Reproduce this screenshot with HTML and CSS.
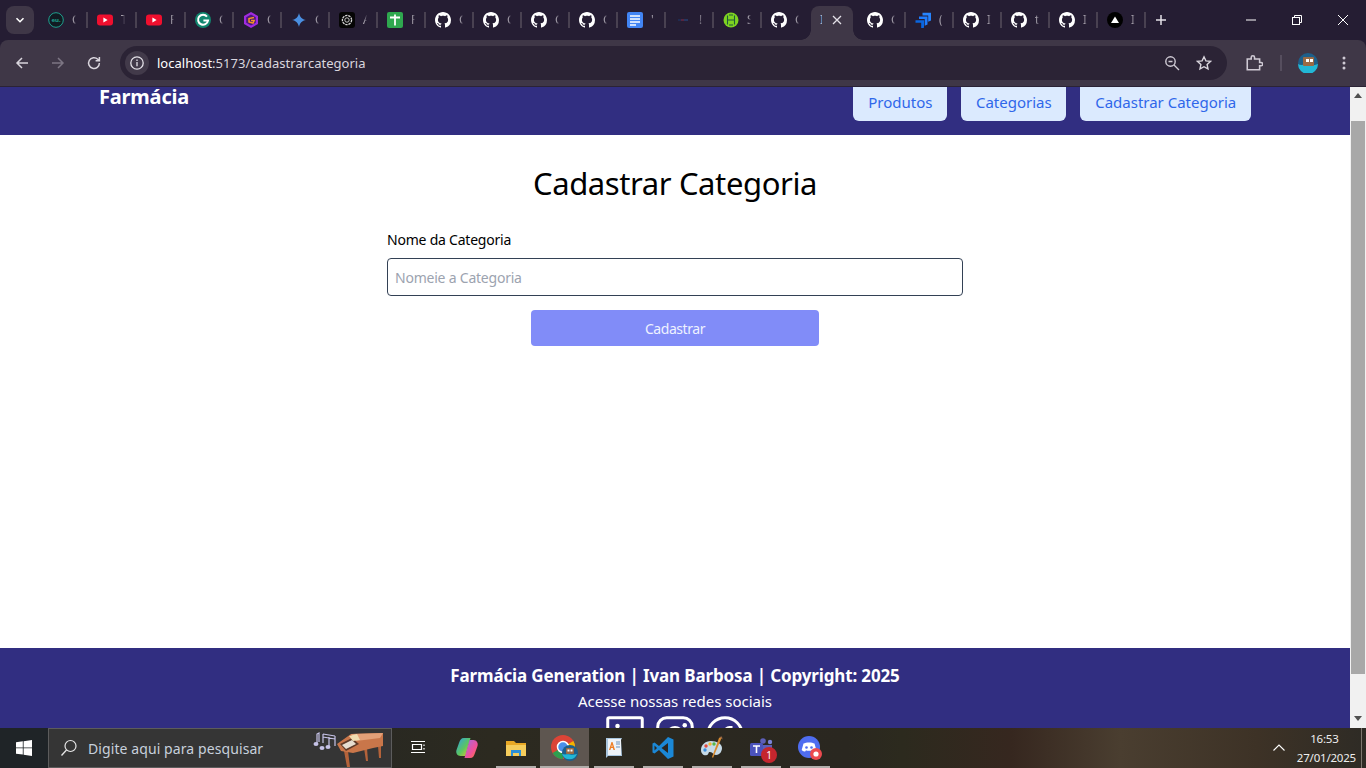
FILE: index.html
```html
<!DOCTYPE html>
<html lang="pt-BR">
<head>
<meta charset="utf-8">
<title>Farmácia</title>
<link rel="stylesheet" href="styles.css">
</head>
<body>
<svg class="defs" width="0" height="0" aria-hidden="true">
  <symbol id="gh" viewBox="0 0 16 16"><path fill="#fff" fill-rule="evenodd" d="M8 0C3.58 0 0 3.58 0 8c0 3.54 2.29 6.53 5.47 7.59.4.07.55-.17.55-.38 0-.19-.01-.82-.01-1.49-2.01.37-2.53-.49-2.69-.94-.09-.23-.48-.94-.82-1.13-.28-.15-.68-.52-.01-.53.63-.01 1.08.58 1.23.82.72 1.21 1.87.87 2.33.66.07-.52.28-.87.51-1.07-1.78-.2-3.64-.89-3.64-3.95 0-.87.31-1.59.82-2.15-.08-.2-.36-1.02.08-2.12 0 0 .67-.21 2.2.82.64-.18 1.32-.27 2-.27.68 0 1.36.09 2 .27 1.53-1.04 2.2-.82 2.2-.82.44 1.1.16 1.92.08 2.12.51.56.82 1.27.82 2.15 0 3.07-1.87 3.75-3.65 3.95.29.25.54.73.54 1.48 0 1.07-.01 1.93-.01 2.2 0 .21.15.46.55.38A8.013 8.013 0 0016 8c0-4.42-3.58-8-8-8z"/></symbol>
  <symbol id="yt" viewBox="0 0 16 16"><rect y="2.5" width="16" height="11" rx="3" fill="#f00f2e"/><path d="M6.4 5.6 10.6 8l-4.2 2.4z" fill="#fff"/></symbol>
</svg>

<header class="tabbar">
  <button class="tabsearch" aria-label="Pesquisar guias"><svg class="ic10" viewBox="0 0 10 10"><path d="M1.5 3.2 5 6.7l3.5-3.5" fill="none" stroke="#fff" stroke-width="1.6"/></svg></button>
  <div class="strip">
    <div class="tab"><svg class="fav" viewBox="0 0 16 16"><circle cx="8" cy="8" r="7.3" fill="#111a22" stroke="#1fa08e" stroke-width="1"/><text class="eu" x="8" y="10.300" text-anchor="middle">eu.</text></svg><span class="sliver">Curso</span></div>
    <div class="tab"><svg class="fav"><use href="#yt"/></svg><span class="sliver">TypeScript</span></div>
    <div class="tab"><svg class="fav"><use href="#yt"/></svg><span class="sliver">Fastify</span></div>
    <div class="tab"><svg class="fav" viewBox="0 0 16 16"><circle cx="8" cy="8" r="8" fill="#11866f"/><path d="M12 4.6A5 5 0 1 0 13 8.6H8.4" fill="none" stroke="#fff" stroke-width="2"/></svg><span class="sliver">Grammarly</span></div>
    <div class="tab"><svg class="fav" viewBox="0 0 16 16"><path d="M8 0 15 4v8l-7 4-7-4V4z" fill="#a02be0"/><path d="M8 2.500 12.800 5.200v5.600L8 13.500 3.200 10.800V5.200z" fill="#4a1a7a"/><path d="M11 5.500 6 6.500v3.500l4 1.200 1.200-2.800H8" fill="none" stroke="#f59324" stroke-width="1.500"/></svg><span class="sliver">Coda</span></div>
    <div class="tab"><svg class="fav" viewBox="0 0 16 16"><path d="M8 1c.6 3.800 3.200 6.400 7 7-3.800.6-6.400 3.200-7 7-.6-3.800-3.200-6.400-7-7 3.800-.6 6.400-3.200 7-7z" fill="#4a8fe0"/></svg><span class="sliver">Gemini</span></div>
    <div class="tab"><svg class="fav" viewBox="0 0 16 16"><rect width="16" height="16" rx="3" fill="#050505"/><circle cx="8" cy="8" r="4.600" fill="none" stroke="#d8d8d8" stroke-width="1.300" stroke-dasharray="2.400 .8"/><circle cx="8" cy="8" r="2.200" fill="none" stroke="#d8d8d8" stroke-width=".9"/></svg><span class="sliver">A</span></div>
    <div class="tab"><svg class="fav" viewBox="0 0 16 16"><rect width="16" height="16" rx="2" fill="#2fa84f"/><path d="M3 5.500h10M8 2.500V13.500" stroke="#fff" stroke-width="1.800"/></svg><span class="sliver">Planilha</span></div>
    <div class="tab"><svg class="fav"><use href="#gh"/></svg><span class="sliver">GitHub</span></div>
    <div class="tab"><svg class="fav"><use href="#gh"/></svg><span class="sliver">GitHub</span></div>
    <div class="tab"><svg class="fav"><use href="#gh"/></svg><span class="sliver">GitHub</span></div>
    <div class="tab"><svg class="fav"><use href="#gh"/></svg><span class="sliver">GitHub</span></div>
    <div class="tab"><svg class="fav" viewBox="0 0 16 16"><rect width="16" height="16" rx="2" fill="#4285f4"/><path d="M3 4h10M3 7h10M3 10h10M3 13h6" stroke="#fff" stroke-width="1.500"/></svg><span class="sliver">'</span></div>
    <div class="tab"><svg class="fav" viewBox="0 0 16 16"><path d="M3 8h3" stroke="#1d3a6e" stroke-width="1"/><path d="M6 8h3" stroke="#8a2f4a" stroke-width="1"/><path d="M9 8h4" stroke="#27508f" stroke-width="1"/></svg><span class="sliver dim">!</span></div>
    <div class="tab"><svg class="fav" viewBox="0 0 16 16"><circle cx="8" cy="8" r="7.500" fill="#7ed321"/><path d="M4.500 3.500v9M11.500 3.500v9M4.500 8h7M6 3h4M6 13h4" fill="none" stroke="#1f5a3a" stroke-width="1.100"/></svg><span class="sliver">S</span></div>
    <div class="tab"><svg class="fav"><use href="#gh"/></svg><span class="sliver">GitHub</span></div>
    <div class="tab active"><span class="sliver active-title">I</span><svg class="ic10" viewBox="0 0 10 10"><path d="M1 1l8 8M9 1 1 9" stroke="#e4e1e8" stroke-width="1.300"/></svg></div>
    <div class="tab"><svg class="fav"><use href="#gh"/></svg><span class="sliver">GitHub</span></div>
    <div class="tab"><svg class="fav" viewBox="0 0 16 16"><path d="M7.500 .8H16V8.500L13.200 9.800V3.400H7.500z" fill="#2684ff"/><path d="M4 4.500h8.500v8L9.700 13.800V7.100H4z" fill="#1f7dff"/><path d="M.5 8.200H9v7.500L6.200 16.500V10.800H.5z" fill="#0a66e0"/></svg><span class="sliver">(</span></div>
    <div class="tab"><svg class="fav"><use href="#gh"/></svg><span class="sliver">I</span></div>
    <div class="tab"><svg class="fav"><use href="#gh"/></svg><span class="sliver">t</span></div>
    <div class="tab"><svg class="fav"><use href="#gh"/></svg><span class="sliver">I</span></div>
    <div class="tab"><svg class="fav" viewBox="0 0 16 16"><circle cx="8" cy="8" r="8" fill="#000"/><path d="M8 4.600 12 11H4z" fill="#fff"/></svg><span class="sliver">I</span></div>
  </div>
  <button class="newtab" aria-label="Nova guia"><svg class="ic12" viewBox="0 0 12 12"><path d="M6 1v10M1 6h10" stroke="#e4e1e8" stroke-width="1.500"/></svg></button>
  <div class="winctrls">
    <span class="winbtn"><svg class="ic12" viewBox="0 0 12 12"><path d="M1 6h10" stroke="#fff"/></svg></span>
    <span class="winbtn"><svg class="ic12" viewBox="0 0 12 12"><path d="M3.500 3V1.500h7v7H9" fill="none" stroke="#fff"/><rect x="1.500" y="3.500" width="7" height="7" fill="none" stroke="#fff"/></svg></span>
    <span class="winbtn"><svg class="ic12" viewBox="0 0 12 12"><path d="M1 1l10 10M11 1 1 11" stroke="#fff"/></svg></span>
  </div>
</header>

<div class="toolbar">
  <div class="navbtns">
    <svg class="tool" viewBox="0 0 16 16"><path d="M14 8H3M8 3 3 8l5 5" fill="none" stroke="#d9d5dd" stroke-width="1.500"/></svg>
    <svg class="tool" viewBox="0 0 16 16"><path d="M2 8h11M8 3l5 5-5 5" fill="none" stroke="#7d7684" stroke-width="1.500"/></svg>
    <svg class="tool" viewBox="0 0 16 16"><path d="M13.400 8A5.400 5.400 0 1 1 11.800 4.200L13.400 5.800M13.400 2v3.800H9.600" fill="none" stroke="#d9d5dd" stroke-width="1.500"/></svg>
  </div>
  <div class="omnibox">
    <span class="sitebtn"><svg class="ic16" viewBox="0 0 16 16"><circle cx="8" cy="8" r="6.200" fill="none" stroke="#e4e1e8" stroke-width="1.300"/><path d="M8 7v4.200M8 4.600v1.300" stroke="#e4e1e8" stroke-width="1.300"/></svg></span>
    <span class="url"><span class="host">localhost</span>:5173/cadastrarcategoria</span>
    <svg class="tool small" viewBox="0 0 16 16"><circle cx="6.500" cy="6.500" r="4.700" fill="none" stroke="#cfcad4" stroke-width="1.400"/><path d="M10 10l5 5M4.500 6.500h4" stroke="#cfcad4" stroke-width="1.400"/></svg>
    <svg class="tool star" viewBox="0 0 16 16"><path d="M8 1.800l1.900 4.100 4.500.5-3.300 3 .9 4.500L8 11.700l-4 2.200.9-4.500-3.300-3 4.500-.5z" fill="none" stroke="#d9d5dd" stroke-width="1.400"/></svg>
  </div>
  <svg class="tool ext" viewBox="0 0 16 16"><path d="M2 4.500h3.500V3a1.500 1.500 0 0 1 3 0v1.500H13V7.500h1.200a1.500 1.500 0 0 1 0 3H13V14H2z" fill="none" stroke="#cfcad4" stroke-width="1.400"/></svg>
  <span class="tooldiv"></span>
  <svg class="avatar" viewBox="0 0 20 20"><circle cx="10" cy="10" r="10" fill="#1e5f8a"/><path d="M0 11c3 2 6 0 10 1s7 0 10-1a10 10 0 0 1-20 0z" fill="#22b7d6"/><rect x="5" y="4" width="11" height="9" rx="1" fill="#9a6a45"/><rect x="8" y="6" width="3" height="3" fill="#fff"/><rect x="12" y="6" width="3" height="3" fill="#fff"/></svg>
  <svg class="tool kebab" viewBox="0 0 16 16"><circle cx="8" cy="3" r="1.500" fill="#cfcad4"/><circle cx="8" cy="8" r="1.500" fill="#cfcad4"/><circle cx="8" cy="13" r="1.500" fill="#cfcad4"/></svg>
</div>

<div class="viewport">
  <div class="pagewrap">
    <div class="page">
      <nav class="sitenav">
        <div class="navinner">
          <div class="brand">Farmácia</div>
          <div class="navlinks">
            <a class="navlink">Produtos</a>
            <a class="navlink">Categorias</a>
            <a class="navlink">Cadastrar Categoria</a>
          </div>
        </div>
      </nav>
      <main class="content">
        <h1 class="title">Cadastrar Categoria</h1>
        <form class="form">
          <label class="label" for="nome">Nome da Categoria</label>
          <input class="input" id="nome" type="text" placeholder="Nomeie a Categoria">
          <button class="submit" type="button">Cadastrar</button>
        </form>
      </main>
      <footer class="sitefoot">
        <p class="footline">Farmácia Generation | Ivan Barbosa | Copyright: 2025</p>
        <p class="footsub">Acesse nossas redes sociais</p>
        <div class="socials">
          <svg class="social" viewBox="0 0 256 256"><rect x="36" y="36" width="184" height="184" rx="8" fill="none" stroke="#fff" stroke-width="16"/><path d="M120 112v64M88 112v64M120 140a28 28 0 0 1 56 0v36" fill="none" stroke="#fff" stroke-width="16"/><circle cx="88" cy="80" r="12" fill="#fff"/></svg>
          <svg class="social" viewBox="0 0 256 256"><rect x="36" y="36" width="184" height="184" rx="48" fill="none" stroke="#fff" stroke-width="16"/><circle cx="128" cy="128" r="40" fill="none" stroke="#fff" stroke-width="16"/><circle cx="180" cy="76" r="12" fill="#fff"/></svg>
          <svg class="social" viewBox="0 0 256 256"><circle cx="128" cy="128" r="92" fill="none" stroke="#fff" stroke-width="16"/><path d="M168 88h-16a24 24 0 0 0-24 24v108M96 144h64" fill="none" stroke="#fff" stroke-width="16"/></svg>
        </div>
      </footer>
    </div>
  </div>
  <div class="scrollbar">
    <span class="arrow up"></span>
    <span class="thumb"></span>
    <span class="arrow down"></span>
  </div>
</div>

<div class="taskbar">
  <span class="startbtn"><svg class="ic16" viewBox="0 0 16 16"><path d="M0 2.300 6.800 1.300v6.200H0zM7.600 1.200 16 0v7.500H7.600zM0 8.300h6.800v6.300L0 13.700zM7.600 8.300H16V16l-8.400-1.200z" fill="#fff"/></svg></span>
  <div class="searchbox">
    <svg class="ic18" viewBox="0 0 18 18"><circle cx="10.500" cy="7" r="5.500" fill="none" stroke="#e6e6e6" stroke-width="1.200"/><path d="M6.500 11 1.500 16.500" stroke="#e6e6e6" stroke-width="1.300"/></svg>
    <span class="searchtext">Digite aqui para pesquisar</span>
    <svg class="piano" viewBox="0 0 72 36"><path d="M4 12V3l2-1v9M10 3v9M16 6v10M22 5v10M10 3l12 2M10 6l12 2" fill="none" stroke="#c6c3e8" stroke-width="1.200"/><ellipse cx="3" cy="13" rx="2.500" ry="2" fill="#c6c3e8"/><ellipse cx="9" cy="17" rx="2.500" ry="2" fill="#c6c3e8"/><ellipse cx="15" cy="16" rx="2.500" ry="2" fill="#c6c3e8"/><path d="M31 20h4l2 16h-3zM51 17h3l1 13h-2zM65 15h3v12h-2z" fill="#b4623a"/><path d="M24 13 38 3l32-1v13l-10 2-20 5-12-2z" fill="#c9764a"/><path d="M38 3l32-1-3 5-24 3z" fill="#e3a078"/><path d="M27 13l12-6 7 6-13 7z" fill="#5f3a28"/><path d="M29 14l10-5 4 4-10 5z" fill="#e6ddd0"/><path d="M36 5l8-2 3 6-7 1z" fill="#efdcb0"/></svg>
  </div>
  <div class="taskapps">
    <span class="app"><svg class="ic18" viewBox="0 0 18 18"><path d="M2 2.500h14M2 13.500h14M3.500 5.500h9v5h-9zM15 5.500v1.500M15 9v1.500" fill="none" stroke="#fff" stroke-width="1.200"/></svg></span>
    <span class="app"><svg class="ic24" viewBox="0 0 24 24"><defs><linearGradient id="cop" x1="0" y1="0" x2="1" y2="1"><stop offset="0" stop-color="#2c9fe8"/><stop offset=".55" stop-color="#5cc65f"/><stop offset="1" stop-color="#f0c22a"/></linearGradient><linearGradient id="cop2" x1="0" y1="0" x2="1" y2="1"><stop offset="0" stop-color="#9a6de7"/><stop offset=".6" stop-color="#f0509a"/><stop offset="1" stop-color="#ff7a2f"/></linearGradient></defs><path d="M9 2c-3 0-4 2-5 5l-2.500 7c-1 3 1 6 4 6h5l5-18z" fill="url(#cop)"/><path d="M15 22c3 0 4-2 5-5l2.500-7c1-3-1-6-4-6h-4l-5 18z" fill="url(#cop2)"/></svg></span>
    <span class="app on"><svg class="ic24" viewBox="0 0 24 24"><path d="M2 5h8l2 2h10v13H2z" fill="#e8a825"/><path d="M2 9h20v11H2z" fill="#f5cd5c"/><path d="M7 14h10v6h-2v-3H9v3H7z" fill="#2a8fd8"/></svg></span>
    <span class="app on current"><svg class="ic28" viewBox="0 0 28 28"><circle cx="12" cy="13" r="12" fill="#db4437"/><path d="M12 13 1.600 19A12 12 0 0 0 12 25z" fill="#2e9e4f"/><path d="M12 13l10.400-6A12 12 0 0 1 14 24.800z" fill="#f4b400"/><circle cx="12" cy="13" r="5.500" fill="#4a8fe8" stroke="#fff" stroke-width="1.500"/><circle cx="19" cy="19" r="8" fill="#1e5f8a"/><path d="M11 20c3 1 5 0 8 .5s5 0 7-.5a8 8 0 0 1-15 0z" fill="#22b7d6"/><rect x="15" y="14" width="8" height="6" rx="1" fill="#9a6a45"/><rect x="16.500" y="15.500" width="2" height="2" fill="#fff"/><rect x="19.500" y="15.500" width="2" height="2" fill="#fff"/></svg></span>
    <span class="app on"><svg class="ic24" viewBox="0 0 24 24"><path d="M4 2h16l-1 2 1 16H6L4 22z" fill="#a9c6df"/><path d="M6 3h13v16H6z" fill="#eef3f8"/><path d="M7 14l2.500-8h1l2.500 8h-1.500l-.6-2H9l-.6 2zM9.400 10.800h1.200L10 8.500z" fill="#ef7d22"/><path d="M14 6h4M14 8h4M14 11h4" stroke="#6c93bd" stroke-width="1"/></svg></span>
    <span class="app on"><svg class="ic24" viewBox="0 0 24 24"><path d="M17 1 8 10 3.500 6.500 1.500 7.500v9l2 1L8 14l9 9 5.500-2.500v-17z" fill="#1b88d6"/><path d="M17 7v10l-6.500-5z" fill="#2a2620"/><path d="M3.500 9.500 6 12l-2.500 2.500z" fill="#2a2620"/></svg></span>
    <span class="app on"><svg class="ic24" viewBox="0 0 24 24"><path d="M11 5C5 5 1 9 1 14c0 4 3 6 6 5 2-.7 1-3 3-3 3 0 3 3 6 3 4 0 6-4 6-7 0-4-5-7-11-7z" fill="#c7dbe8"/><circle cx="6" cy="10" r="1.700" fill="#e2483d"/><circle cx="10" cy="8" r="1.700" fill="#f2b632"/><circle cx="14" cy="8" r="1.700" fill="#58b947"/><circle cx="5" cy="14" r="1.700" fill="#3d8fdc"/><path d="M22 1 13 22l-1-1L19 2z" fill="#d98b2e"/><path d="M19 1l3-.5.5 3z" fill="#9a6a45"/></svg></span>
    <span class="app on"><svg class="ic24" viewBox="0 0 24 24"><circle cx="14" cy="5" r="2.800" fill="#5d5fb8"/><circle cx="21" cy="6" r="2.200" fill="#7b83d8"/><path d="M10 9h13v6a5 5 0 0 1-10 0z" fill="#5d5fb8"/><rect x="1" y="7" width="13" height="13" rx="1.500" fill="#4b53bc"/><path d="M4 10h7M7.500 10v7" stroke="#fff" stroke-width="1.600"/></svg><span class="badge">1</span></span>
    <span class="app on"><svg class="ic24" viewBox="0 0 24 24"><circle cx="11" cy="11" r="11" fill="#4f6df0"/><path d="M5.500 7.500C8 6 14 6 16.500 7.500l1.800 6.500c-1 1-2.500 1.500-3.500 1.500l-.8-1.300c-2 .7-5 .7-6 0l-.8 1.300c-1 0-2.500-.5-3.500-1.500z" fill="#fff"/><circle cx="8.500" cy="11.500" r="1.300" fill="#4f6df0"/><circle cx="13.500" cy="11.500" r="1.300" fill="#4f6df0"/><circle cx="18" cy="18" r="6" fill="#ec4a4f"/><circle cx="18" cy="18" r="2.600" fill="#fff"/></svg></span>
  </div>
  <div class="tray">
    <svg class="ic12 traychev" viewBox="0 0 12 12"><path d="M.500 8.500 6 3l5.500 5.500" fill="none" stroke="#fff" stroke-width="1.100"/></svg>
    <div class="clock"><span class="time">16:53</span><span>27/01/2025</span></div>
    <span class="showdesk"></span>
  </div>
</div>
</body>
</html>
```

FILE: styles.css
```css
* { box-sizing: border-box; }
html, body { margin: 0; padding: 0; height: 100%; overflow: hidden; }
body {
  display: flex;
  flex-direction: column;
  height: 768px;
  font-family: "Noto Sans", "Open Sans", sans-serif;
  background: #251d33;
}
.defs { display: block; height: 0; }
svg { display: block; flex: none; }
button { border: 0; padding: 0; font: inherit; }
p { margin: 0; }

.ic10 { width: 10px; height: 10px; }
.ic12 { width: 12px; height: 12px; }
.ic16 { width: 16px; height: 16px; }
.ic18 { width: 18px; height: 18px; }
.ic24 { width: 24px; height: 24px; }
.ic28 { width: 28px; height: 28px; }

/* tab strip */
.tabbar {
  height: 40px;
  flex: none;
  display: flex;
  align-items: center;
  background: #251d33;
  padding-left: 6px;
}
.tabsearch {
  width: 28px;
  height: 28px;
  border-radius: 8px;
  background: #3f3747;
  display: flex;
  align-items: center;
  justify-content: center;
  margin-right: 6px;
}
.strip { display: flex; width: 1107px; height: 40px; }
.tab {
  position: relative;
  flex: 0 0 48px;
  min-width: 0;
  display: flex;
  align-items: center;
  gap: 8px;
  padding-left: 8px;
}
.tab:nth-child(-n+3) { flex-basis: 49px; }
.tab::after {
  content: "";
  position: absolute;
  right: 1px;
  top: 12px;
  height: 16px;
  width: 2px;
  background: #494151;
}
.tab:has(+ .active)::after, .tab.active::after { display: none; }
.fav { width: 16px; height: 16px; }
.eu { font-size: 6px; font-weight: 700; fill: #1fa08e; }
.sliver {
  width: 4px;
  overflow: hidden;
  white-space: nowrap;
  font-size: 12px;
  line-height: 16px;
  color: #b6b1bb;
  -webkit-mask-image: linear-gradient(90deg, #000 25%, transparent);
  mask-image: linear-gradient(90deg, #000 25%, transparent);
}
.sliver.dim { color: #8b8592; }
.tab.active {
  flex: 0 0 42px;
  margin: 6px 6px 0 0;
  height: 34px;
  padding: 0 0 6px 9px;
  gap: 10px;
  background: #3f3747;
  border-radius: 8px 8px 0 0;
}
.tab.active::before {
  content: "";
  position: absolute;
  left: -10px;
  right: -10px;
  bottom: 0;
  height: 10px;
  background:
    radial-gradient(circle at 0 0, #251d33 9.500px, #3f3747 10px) left / 10px 10px no-repeat,
    radial-gradient(circle at 100% 0, #251d33 9.500px, #3f3747 10px) right / 10px 10px no-repeat;
}
.active-title { width: 2px; mask-image: none; -webkit-mask-image: none; }
.newtab {
  width: 28px;
  height: 28px;
  background: none;
  display: flex;
  align-items: center;
  justify-content: center;
}
.winctrls { display: flex; margin-left: auto; }
.winbtn {
  width: 46px;
  height: 40px;
  display: flex;
  align-items: center;
  justify-content: center;
}

/* toolbar */
.toolbar {
  height: 47px;
  flex: none;
  display: flex;
  align-items: center;
  background: #3f3747;
  border-radius: 8px 8px 0 0;
  border-bottom: 1px solid #2b2335;
  padding: 0 14px 0 0;
}
.navbtns { display: flex; gap: 20px; padding-left: 14px; width: 120px; }
.tool { width: 16px; height: 16px; }
.omnibox {
  width: 1108px;
  height: 34px;
  border-radius: 17px;
  background: #2b2335;
  display: flex;
  align-items: center;
  padding: 0 15px 0 5px;
}
.sitebtn {
  width: 24px;
  height: 24px;
  border-radius: 50%;
  background: #423a4a;
  display: flex;
  align-items: center;
  justify-content: center;
  margin-right: 8px;
}
.url {
  flex: 1;
  font-size: 13px;
  color: #dad6de;
  letter-spacing: .03px;
}
.host { color: #fff; }
.small { margin-right: 16px; }
.ext { margin-left: 18px; width: 18px; height: 18px; }
.tooldiv { width: 2px; height: 16px; background: #564e5e; margin: 0 16px 0 17px; }
.avatar { width: 20px; height: 20px; }
.kebab { margin-left: 18px; }

/* page */
.viewport {
  height: 641px;
  flex: none;
  display: flex;
  overflow: hidden;
  background: #fff;
}
.pagewrap { flex: 1; min-width: 0; overflow: hidden; }
.page { margin-top: -17px; }
.sitenav {
  height: 65px;
  background: #312e81;
  padding-top: 11px;
}
.navinner {
  width: 1152px;
  margin: 0 auto;
  display: flex;
  justify-content: space-between;
  align-items: flex-start;
}
.brand {
  font-size: 20px;
  font-weight: 700;
  line-height: 32px;
  color: #fff;
  letter-spacing: -.2px;
}
.navlinks { display: flex; gap: 14px; }
.navlink {
  height: 40px;
  line-height: 42px;
  padding: 0 14.750px;
  background: #dbeafe;
  border-radius: 6px;
  color: #2f67ea;
  font-size: 15px;
}
.content {
  height: 513px;
  background: #fff;
  display: flex;
  flex-direction: column;
  align-items: center;
  padding-top: 25px;
}
.title {
  margin: 0 0 24px;
  font-size: 31px;
  font-weight: 400;
  line-height: 46px;
  color: #000;
  letter-spacing: -.4px;
}
.form { width: 576px; display: flex; flex-direction: column; }
.label { font-size: 14px; line-height: 20px; color: #000; margin-bottom: 8px; letter-spacing: -.22px; }
.input {
  height: 38px;
  border: 1px solid #334155;
  border-radius: 4px;
  padding: 0 7px;
  font: inherit;
  font-size: 14px;
  letter-spacing: -.22px;
  outline: none;
  background: #fff;
}
.input::placeholder { color: #9ca3af; opacity: 1; }
.submit {
  align-self: center;
  width: 288px;
  height: 36px;
  margin-top: 14px;
  background: #818cf8;
  border-radius: 4px;
  color: #eef2ff;
  font-size: 14px;
  letter-spacing: -.44px;
}
.sitefoot {
  height: 180px;
  background: #312e81;
  color: #fff;
  display: flex;
  flex-direction: column;
  align-items: center;
  padding-top: 14px;
}
.footline { font-size: 17px; font-weight: 700; line-height: 28px; letter-spacing: -.14px; }
.footsub { font-size: 15px; line-height: 22px; }
.socials { display: flex; gap: 2px; margin-top: -1px; }
.social { width: 48px; height: 48px; }

/* scrollbar */
.scrollbar {
  width: 16px;
  flex: none;
  background: #f1f1f1;
  display: flex;
  flex-direction: column;
  align-items: center;
}
.arrow { width: 0; height: 0; border-left: 4px solid transparent; border-right: 4px solid transparent; }
.up { margin-top: 6px; border-bottom: 5px solid #505050; }
.thumb { width: 14px; height: 553px; margin-top: 23px; background: #a8a8a8; }
.down { margin-top: 42px; border-top: 5px solid #505050; }

/* taskbar */
.taskbar {
  height: 40px;
  flex: none;
  display: flex;
  align-items: center;
  background: linear-gradient(90deg, #1f2427 0, #1f2427 4%, #2c2a20 36%, #2a2720 62%, #2c2a1e 66%, #36271f 74%, #4a3e30 82%, #3d3226 92%, #2e2b25 100%);
}
.startbtn { width: 48px; height: 40px; display: flex; align-items: center; justify-content: center; }
.searchbox {
  width: 344px;
  height: 40px;
  background: #353535;
  border: 1px solid #5c5c5c;
  display: flex;
  align-items: center;
  padding-left: 11px;
  position: relative;
}
.searchtext { margin-left: 10px; font-size: 14px; color: #c7d0dc; letter-spacing: .09px; }
.piano { position: absolute; right: 6px; top: 2px; width: 72px; height: 36px; }
.taskapps { display: flex; margin-left: 1px; }
.app {
  position: relative;
  width: 49px;
  height: 40px;
  display: flex;
  align-items: center;
  justify-content: center;
}
.app.on::after {
  content: "";
  position: absolute;
  left: 5px;
  right: 4px;
  bottom: 0;
  height: 2px;
  background: #b1aeab;
}
.app.current { background: #5e5650; }
.app.current::after { left: 0; right: 0; }
.badge {
  position: absolute;
  right: 8px;
  bottom: 5px;
  width: 16px;
  height: 16px;
  border-radius: 50%;
  background: #c4262e;
  color: #fff;
  font-size: 10px;
  line-height: 16px;
  text-align: center;
}
.tray { margin-left: auto; display: flex; align-items: center; height: 40px; }
.traychev { margin-right: 12px; }
.clock {
  display: flex;
  flex-direction: column;
  align-items: center;
  font-size: 11.500px;
  line-height: 19px;
  color: #efefef;
  letter-spacing: -.2px;
}
.time { margin-right: 4px; }
.showdesk { width: 1px; height: 40px; background: #7d776f; margin: 0 4px 0 5px; }
```
